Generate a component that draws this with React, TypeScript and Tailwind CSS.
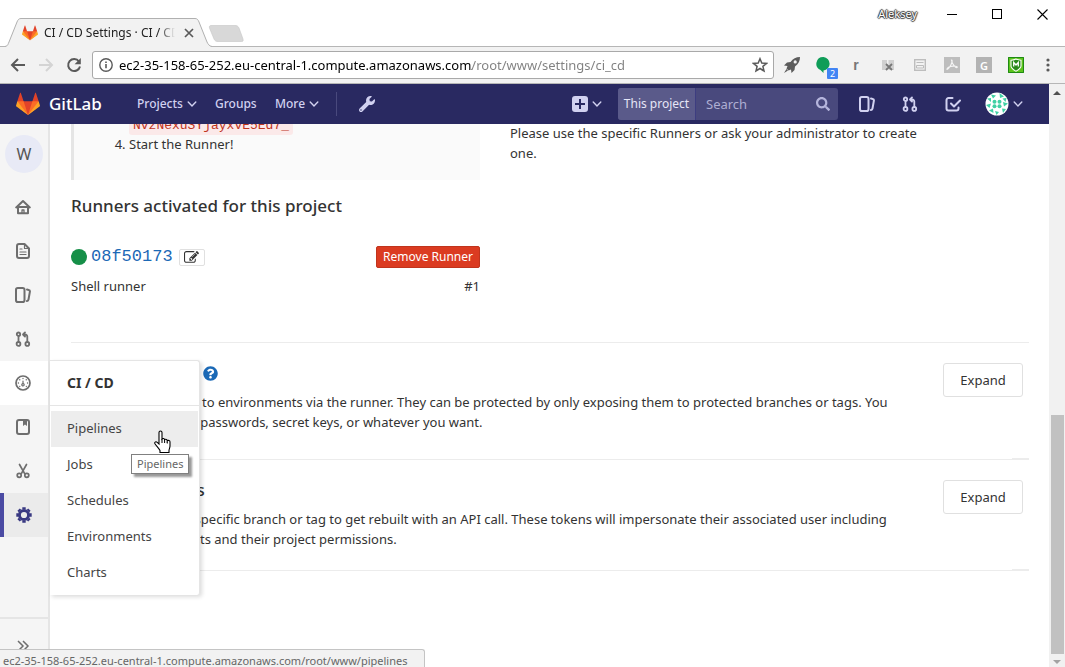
import React from "react";
import { FaWrench, FaQuestionCircle, FaSearch } from "react-icons/fa";

type IconProps = { className?: string };

function GitLabLogo({ className }: IconProps) {
  return (
    <svg className={className} viewBox="0 0 36 36" aria-hidden="true">
      <path fill="#e24329" d="M2 14l9.38 9v-9l-4-12.28c-.205-.632-1.176-.632-1.38 0z" />
      <path fill="#e24329" d="M34 14l-9.38 9v-9l4-12.28c.205-.632 1.176-.632 1.38 0z" />
      <path fill="#e24329" d="M18 34.38L3 14h30z" />
      <path fill="#fc6d26" d="M18 34.38L11.38 14H2l4 11z" />
      <path fill="#fc6d26" d="M18 34.38L24.62 14H34l-4 11z" />
      <path fill="#fca326" d="M2 14L.1 20.16c-.18.565 0 1.2.5 1.56L18.02 34.38z" />
      <path fill="#fca326" d="M34 14l1.9 6.16c.18.565 0 1.2-.5 1.56L18 34.38z" />
    </svg>
  );
}

function Line({ className = "size-4", width = 2, children }: IconProps & { width?: number; children: React.ReactNode }) {
  return (
    <svg className={`shrink-0 ${className}`} viewBox="0 0 16 16" fill="none" stroke="currentColor" strokeWidth={width} strokeLinecap="round" strokeLinejoin="round" aria-hidden="true">
      {children}
    </svg>
  );
}

const Chevron = () => (
  <svg className="h-[10px] w-[10px] shrink-0" viewBox="0 0 10 10" fill="none" stroke="currentColor" strokeWidth="1.4" strokeLinecap="round" aria-hidden="true">
    <path d="M1.2 3l3.8 4 3.8-4" />
  </svg>
);

const HomeIcon = () => (
  <Line>
    <path d="M1.2 8.4L8 2l6.800 6.400" />
    <path d="M3 8.500V14.200H13V8.500M3.500 8h9" />
    <path d="M7 14v-3h2v3" strokeWidth={1.300} />
  </Line>
);
const FileIcon = () => (
  <Line>
    <path d="M4 1h5.500L14 5.500V13a2 2 0 0 1-2 2H4a2 2 0 0 1-2-2V3a2 2 0 0 1 2-2z" />
    <path d="M9.500 1.500v4h4M5 6h2M5 9h6M5 11.500h6" strokeWidth={1.200} />
  </Line>
);
const IssuesIcon = ({ className = "size-4" }: IconProps) => (
  <Line className={className}>
    <rect x="1" y="1" width="8.500" height="14" rx="1.800" />
    <path d="M12 2.600l1.700.3a1.500 1.500 0 0 1 1.200 1.700L13.500 12.500a1.800 1.800 0 0 1-1.500 1.500" />
  </Line>
);
const MergeIcon = ({ className = "size-4" }: IconProps) => (
  <Line className={className} width={1.8}>
    <circle cx="3.500" cy="3.200" r="1.700" />
    <circle cx="3.500" cy="12.900" r="1.900" />
    <circle cx="12.300" cy="12.900" r="1.900" />
    <path d="M3.500 5v6M12.300 11V5.500a2 2 0 0 0-2-2H9M10 1.500L8 3.500l2 2" />
  </Line>
);
const GaugeIcon = () => (
  <Line width={1.7}>
    <circle cx="8" cy="8" r="7" />
    <path d="M8 3.300v.2M4.700 4.700l.1.100M11.300 4.700l-.1.100M3.300 8h.2M12.500 8h.2M4.700 11.300h.1M11.300 11.300h.1" strokeWidth={1.300} />
    <path d="M8 6v3" strokeWidth={1.200} />
    <circle cx="8" cy="9.700" r="1.200" strokeWidth={1.200} />
  </Line>
);
const BookIcon = () => (
  <Line>
    <rect x="2" y="1" width="12" height="14" rx="2" />
    <path d="M8 1h4v6l-2-1.600L8 7z" fill="currentColor" stroke="none" />
  </Line>
);
const ScissorsIcon = () => (
  <Line width={1.7}>
    <path d="M4.500 1.500l5 8.800M11.500 1.500l-5 8.800" />
    <circle cx="4.200" cy="12.300" r="2" />
    <circle cx="11.800" cy="12.300" r="2" />
  </Line>
);
const GearIcon = () => (
  <Line>
    <circle cx="8" cy="8" r="4.600" strokeWidth={3} />
    <path d="M8 .3v2M8 13.700v2M.3 8h2M13.700 8h2M2.600 2.600L4 4M12 12l1.400 1.400M2.600 13.400L4 12M12 4l1.400-1.400" strokeWidth={3.400} strokeLinecap="butt" />
  </Line>
);
const TodoIcon = () => (
  <Line>
    <path d="M7.500 2H3.500A2 2 0 0 0 1.500 4v8.500a2 2 0 0 0 2 2h8a2 2 0 0 0 2-2V11.500" />
    <path d="M6 7.500l3 3L15 4.500" />
  </Line>
);
const EditIcon = () => (
  <svg className="size-[15px]" viewBox="0 0 1792 1792" fill="currentColor" aria-hidden="true">
    <path d="M888 1184l116-116-152-152-116 116v56h96v96h56zm440-720q-16-16-33 1l-350 350q-17 17-1 33t33-1l350-350q17-17 1-33zm80 594v190q0 119-84.500 203.500t-203.500 84.500h-832q-119 0-203.500-84.500t-84.500-203.500v-832q0-119 84.500-203.500t203.500-84.500h832q63 0 117 25 15 7 18 23 3 17-9 29l-49 49q-14 14-32 8-23-6-45-6h-832q-66 0-113 47t-47 113v832q0 66 47 113t113 47h832q66 0 113-47t47-113v-126q0-13 9-22l64-64q15-15 35-7t20 29zm-96-738l288 288-672 672h-288v-288zm444 132l-92 92-288-288 92-92q28-28 68-28t68 28l152 152q28 28 28 68t-28 68z" />
  </svg>
);

const sidebarItems = [
  { label: "Overview", icon: <HomeIcon /> },
  { label: "Repository", icon: <FileIcon /> },
  { label: "Issues", icon: <IssuesIcon /> },
  { label: "Merge Requests", icon: <MergeIcon /> },
  { label: "CI / CD", icon: <GaugeIcon />, open: true },
  { label: "Wiki", icon: <BookIcon /> },
  { label: "Snippets", icon: <ScissorsIcon /> },
  { label: "Settings", icon: <GearIcon />, active: true },
];

function TabStrip() {
  return (
    <div className="flex h-[47px] shrink-0 border-b border-[#b6b6b6] bg-white">
      <div className="relative mt-[18px] ml-[5px] h-[29px] w-[207px] shrink-0">
        <svg className="absolute inset-0 h-full w-full" viewBox="0 0 207 29" aria-hidden="true">
          <path d="M0 29C3 28 3 26 4 24L12 4C13 1.500 14 .5 16 .5H190C192 .5 193 1.500 194 4L202 24C203 26 204 28 207 29z" fill="#f2f2f2" />
          <path d="M0 28.500C3 28 3 26 4 24L12 4C13 1.500 14 .5 16 .5H190C192 .5 193 1.500 194 4L202 24C203 26 204 28 207 28.500" fill="none" stroke="#b0b0b0" />
        </svg>
        <div className="relative flex h-full items-center pl-[17px]">
          <GitLabLogo className="size-4 shrink-0" />
          <span className="ml-[6px] w-[131px] overflow-hidden text-xs whitespace-nowrap text-[#222] [mask-image:linear-gradient(to_right,black_88%,transparent)]">CI / CD Settings · CI / CD</span>
          <button aria-label="Close tab" className="ml-[9px] text-[#5a5a5a]">
            <svg className="size-[10px]" viewBox="0 0 10 10" stroke="currentColor" strokeWidth="1.700" aria-hidden="true"><path d="M1 1l8 8M9 1L1 9" /></svg>
          </button>
        </div>
      </div>
      <button aria-label="New tab" className="mt-[25px] -ml-[4px] h-[17px]">
        <svg className="h-[17px] w-9" viewBox="0 0 36 17" aria-hidden="true"><path d="M3 .5H27C29 .5 30 1 31 3L35 14C35.500 16 35 16.500 33.500 16.500H10C8 16.500 7 16 6 14L1.500 3C1 1.500 1.500 .5 3 .5z" fill="#d8d8d8" stroke="#c6c6c6" strokeWidth=".6" /></svg>
      </button>
      <div className="ml-auto flex h-7 items-center">
        <span className="mr-3 text-[11px] text-white [text-shadow:1px_0_1px_#333,-1px_0_1px_#333,0_1px_1px_#333,0_-1px_1px_#333]">Aleksey</span>
        <button aria-label="Minimize" className="flex h-7 w-[45px] items-center justify-center"><span className="h-px w-[10px] bg-black" /></button>
        <button aria-label="Maximize" className="flex h-7 w-[45px] items-center justify-center"><span className="size-[10px] border border-black" /></button>
        <button aria-label="Close" className="flex h-7 w-[46px] items-center justify-center">
          <svg className="size-[11px]" viewBox="0 0 11 11" stroke="#000" strokeWidth="1.100" aria-hidden="true"><path d="M.5 .5l10 10M10.500 .5l-10 10" /></svg>
        </button>
      </div>
    </div>
  );
}

function Extension({ label, children }: { label: string; children: React.ReactNode }) {
  return (
    <button aria-label={label} className="flex h-9 w-8 shrink-0 items-center justify-center">
      {children}
    </button>
  );
}

function Toolbar() {
  return (
    <div className="flex h-[37px] shrink-0 items-center border-b border-[#b6b6b6] bg-[#f2f2f2] pr-px">
      <div className="flex w-[92px] shrink-0 items-center gap-3 pl-[10px] text-[#5a5a5a]">
        <button aria-label="Back"><Line><path d="M15 8H2M8 2L2 8l6 6" strokeLinecap="butt" strokeLinejoin="miter" /></Line></button>
        <button aria-label="Forward" className="text-[#d4d4d4]"><Line><path d="M1 8h13M8 2l6 6-6 6" strokeLinecap="butt" strokeLinejoin="miter" /></Line></button>
        <button aria-label="Reload">
          <Line><path d="M13 4.500A6 6 0 1 0 14 9.500" strokeLinecap="butt" /><path d="M14.800 1v6.200H8.600z" fill="currentColor" stroke="none" /></Line>
        </button>
      </div>
      <div className="flex h-7 min-w-0 flex-1 items-center rounded-[3px] border border-[#a9a9a9] bg-white pr-[5px] pl-[6px]">
        <svg className="size-[14px] shrink-0" viewBox="0 0 14 14" fill="none" stroke="#5a5a5a" strokeWidth="1.400" aria-hidden="true"><circle cx="7" cy="7" r="6.200" /><path d="M7 6v4.200M7 3.500v1.400" strokeWidth="1.600" /></svg>
        <input
          aria-label="Address"
          readOnly
          value="ec2-35-158-65-252.eu-central-1.compute.amazonaws.com/root/www/settings/ci_cd"
          className="ml-[6px] min-w-0 flex-1 bg-[linear-gradient(to_right,#000_353px,#808080_353px)] bg-clip-text pt-px text-[13px] text-transparent outline-none"
        />
        <button aria-label="Bookmark this page">
          <svg className="size-4" viewBox="0 0 16 16" fill="none" stroke="#5a5a5a" strokeWidth="1.500" aria-hidden="true"><path d="M8 1.700l1.800 4.300 4.700.4-3.600 3 1.100 4.600L8 11.500 4 14l1.100-4.600-3.600-3L6.200 6z" /></svg>
        </button>
      </div>
      <div className="ml-[2px] flex shrink-0">
        <Extension label="Rocket">
          <svg className="size-4" viewBox="0 0 16 16" fill="#5c5c5c" aria-hidden="true"><path fillRule="evenodd" d="M16 0C12 0 9 1.500 6.500 5L3 5.500 0 8.500l3.500.5L2.500 11.500l2 2L7 12.500 7.500 16l3-3L11 9.500C14.500 7 16 4 16 0zM11.200 3.300a1.600 1.600 0 1 1 0 3.200 1.600 1.600 0 0 1 0-3.200z" /><path d="M2.500 12L0 16l4-2.500z" /></svg>
        </Extension>
        <Extension label="Chat">
          <span className="relative">
            <svg className="size-4" viewBox="0 0 16 16" fill="#0f9d58" aria-hidden="true"><path d="M7.500 0a7 6.800 0 0 1 0 13.500V16L4.500 13A7 6.800 0 0 1 7.500 0z" /></svg>
            <span className="absolute top-[11px] left-[11px] flex h-[11px] w-[11px] items-center justify-center rounded-[1px] bg-[#4285f4] text-[9px] leading-none text-white">2</span>
          </span>
        </Extension>
        <Extension label="Reader"><span className="font-['Liberation_Sans',sans-serif] text-sm leading-4 font-bold text-[#777]">r</span></Extension>
        <Extension label="Blocker">
          <svg className="size-3" viewBox="0 0 12 12" aria-hidden="true"><path d="M0 1h5v10H0zM6.500 1H12v10H6.500z" fill="#d0d0d0" /><path d="M4 5l6 6M10 5l-6 6" stroke="#777" strokeWidth="1.800" /></svg>
        </Extension>
        <Extension label="News">
          <svg className="size-3" viewBox="0 0 12 12" fill="none" stroke="#bdbdbd" aria-hidden="true"><rect x=".7" y=".7" width="10.600" height="10.600" strokeWidth="1.400" /><path d="M2.500 3.500h7M2.500 6.500h7v2.500h-7z" /></svg>
        </Extension>
        <Extension label="PDF">
          <svg className="size-4" viewBox="0 0 16 16" aria-hidden="true"><path fill="#bdbdbd" d="M0 0h16v16H0z" /><path d="M7.500 3c1.500 0 0 4-1.500 6.500S2.500 13 3 12s3-2.500 6-2.800 5 .8 4 1.400S8 7.500 7.500 3z" fill="none" stroke="#f4f4f4" strokeWidth="1.200" /></svg>
        </Extension>
        <Extension label="Grammar"><span className="flex size-4 items-center justify-center bg-[#b3b3b3] text-[11px] leading-none font-semibold text-white">G</span></Extension>
        <Extension label="Shield">
          <svg className="size-4" viewBox="0 0 16 16" aria-hidden="true"><path fill="#5cc41c" d="M0 0h16v16H0z" /><path d="M.5 .5h15v15H.5z" fill="none" stroke="#1f8a14" /><path d="M3 3.200c2 0 3.500-.4 5-1.200 1.500.8 3 1.200 5 1.200V9c0 2.500-3 4-5 5.200C6 13 3 11.500 3 9z" fill="#2a8a1c" stroke="#fff" strokeWidth="1.100" /><path d="M5.700 9.500V5.500L8 8l2.300-2.500v4" fill="none" stroke="#fff" strokeWidth="1.300" /></svg>
        </Extension>
        <Extension label="Menu">
          <svg className="h-[14px] w-1" viewBox="0 0 4 14" fill="#5a5a5a" aria-hidden="true"><circle cx="2" cy="2" r="1.600" /><circle cx="2" cy="7" r="1.600" /><circle cx="2" cy="12" r="1.600" /></svg>
        </Extension>
      </div>
    </div>
  );
}

function Navbar() {
  return (
    <header className="flex h-10 shrink-0 items-center bg-[#292961] pr-[26px] pl-4 text-[#d1d1f0]">
      <a href="#home" className="flex items-center gap-[9px]">
        <GitLabLogo className="size-6" />
        <span className="w-[88px] text-[17px] leading-6 font-medium text-white">GitLab</span>
      </a>
      <nav className="flex items-center text-xs font-medium">
        <a href="#projects" className="flex w-[78px] items-center gap-1">Projects<Chevron /></a>
        <a href="#groups" className="w-[60px]">Groups</a>
        <a href="#more" className="flex w-[61px] items-center gap-1">More<Chevron /></a>
      </nav>
      <span className="h-6 w-px bg-[#49497d]" />
      <a href="#admin" aria-label="Admin area" className="ml-[22px]"><FaWrench className="size-4 -scale-x-100 rotate-90" /></a>
      <div className="ml-auto flex items-center">
        <button aria-label="New" className="flex items-center gap-1">
          <svg className="size-4" viewBox="0 0 16 16" aria-hidden="true"><rect width="16" height="16" rx="3" fill="currentColor" /><path d="M8 3v10M3 8h10" stroke="#292961" strokeWidth="2" /></svg>
          <Chevron />
        </button>
        <form className="ml-4 flex h-8 w-[220px] items-center overflow-hidden rounded-[3px] bg-[#49497d] text-sm">
          <span className="flex h-full w-[78px] shrink-0 items-center justify-center border-r border-[#3d3d80] bg-[#5a5a8a] text-xs text-[#e6e6f7]">This project</span>
          <input aria-label="Search" placeholder="Search" className="min-w-0 flex-1 bg-transparent pl-[10px] text-[13px] outline-none placeholder:text-[#aeaed2]" />
          <FaSearch className="mr-2 size-[14px] shrink-0 text-[#b5b5dc]" />
        </form>
        <a href="#issues" aria-label="Issues" className="ml-[21px]"><IssuesIcon /></a>
        <a href="#merge_requests" aria-label="Merge requests" className="ml-[27px]"><MergeIcon /></a>
        <a href="#todos" aria-label="Todos" className="ml-[27px]"><TodoIcon /></a>
        <button aria-label="Account" className="ml-6 flex items-center gap-1">
          <svg className="size-6" viewBox="0 0 24 24" aria-hidden="true">
            <circle cx="12" cy="12" r="11.500" fill="#fff" />
            <g fill="#3fd0a4">
              <path d="M6 2.500l5 1-3 3zM14.500 1l4.500 3.500-4 1.500zM2 6.500L6 6v4zM1 13l5-1.500L4.500 16zM4 18.500l4-2 .5 4.500zM10 19l4 1-2.500 3zM17 16.500l4 .5-3 4zM18 10l5 1.500-4 3zM17.500 6.500l4-.5-1 4z" />
              <circle cx="9.500" cy="9.700" r="2" /><circle cx="14.500" cy="9.700" r="2" /><circle cx="9.500" cy="14.300" r="2" /><circle cx="14.500" cy="14.300" r="2" />
            </g>
          </svg>
          <Chevron />
        </button>
      </div>
    </header>
  );
}

function PipelineMenu() {
  return (
    <div className="absolute -top-px left-[50px] z-10 w-[150px] rounded-r-[3px] border-t border-r border-[#e5e5e5] bg-white pb-1 text-[13px] text-[#444] shadow-[2px_2px_4px_rgba(0,0,0,0.14)]">
      <div className="flex h-[45px] items-center border-b border-[#e5e5e5] pl-[17px] text-sm font-bold text-[#333]">CI / CD</div>
      <ul className="pt-[5px]">
        {["Pipelines", "Jobs", "Schedules", "Environments", "Charts"].map((label) => (
          <li key={label} className={label === "Pipelines" ? "mr-px ml-px bg-[#ededed]" : "mr-px ml-px"}>
            <a href={`#${label.toLowerCase()}`} className="flex h-9 items-center pl-4">{label}</a>
          </li>
        ))}
      </ul>
      <svg className="absolute top-[70px] left-[104px] h-[22px] w-[18px] overflow-visible" viewBox="0 0 18 22" aria-hidden="true">
        <path d="M5 1.500a1.500 1.500 0 0 1 3 0V8a1.500 1.500 0 0 1 2.600.7A1.600 1.600 0 0 1 13.300 10 1.500 1.500 0 0 1 16 11V15c0 2-1 3-1 4.500V21.500H6V19.500C5 17.500 2 14.500.8 12.500.2 11 2 10.200 3.200 11.300L5 13z" fill="#fff" stroke="#000" strokeWidth="1.100" />
        <path d="M8 8v4M10.600 9v3M13.300 10.500v2" stroke="#000" strokeWidth="1" />
      </svg>
      <div role="tooltip" className="absolute top-[93px] left-[81px] flex h-5 items-center border border-[#808080] bg-white px-[5px] text-[11px] text-[#666] shadow-[3px_3px_2px_rgba(0,0,0,0.4)]">Pipelines</div>
    </div>
  );
}

function Sidebar() {
  return (
    <aside className="flex w-[50px] shrink-0 flex-col border-r-2 border-[#e5e5e5] bg-[#f5f5f5] text-[#6e6e6e]">
      <a href="#project" className="mt-[11px] ml-[5px] flex size-[38px] shrink-0 items-center justify-center rounded-full bg-[#e8eaf6] text-base text-[#555]">W</a>
      <ul className="mt-3">
        {sidebarItems.map((item) => (
          <li key={item.label} className={`relative h-11 ${item.open ? "bg-white" : item.active ? "bg-[#ebebeb] text-[#393982]" : ""}`}>
            <a href="#section" aria-label={item.label} className={`flex h-11 w-full items-center ${item.active ? "border-l-4 border-[#4b4ba3] pl-3" : "pl-[15px]"}`}>{item.icon}</a>
            {item.open && <PipelineMenu />}
          </li>
        ))}
      </ul>
      <button aria-label="Expand sidebar" className="mt-auto flex h-[50px] shrink-0 items-center border-t-2 border-[#e5e5e5] pt-[6px] pl-4">
        <svg className="size-[14px]" viewBox="0 0 14 14" fill="none" stroke="currentColor" strokeWidth="1.500" aria-hidden="true"><path d="M2 2l5 5-5 5M7 2l5 5-5 5" /></svg>
      </button>
    </aside>
  );
}

function SettingsSection({ title, help, className, children }: { title: string; help?: boolean; className: string; children: React.ReactNode }) {
  return (
    <section className={`flex flex-col border-b border-[#ececec] pt-5 ${className}`}>
      <div className="flex justify-between pr-[6px]">
        <div className="max-w-[836px]">
          <h4 className="flex h-5 items-center gap-1 text-[17px] font-medium text-[#333]">
            {title}
            {help && <a href="#help" aria-label="Help"><FaQuestionCircle className="size-[15px] text-[#1b69b6]" /></a>}
          </h4>
          <p className="mt-[9px]">{children}</p>
        </div>
        <button className="h-[34px] w-20 shrink-0 rounded-[3px] border border-[#e0e0e0] bg-white text-[13px]">Expand</button>
      </div>
      <span className="mt-auto h-px w-[17px] self-end bg-[#ececec]" />
    </section>
  );
}

function Content() {
  return (
    <main className="min-w-0 flex-1 overflow-hidden pr-5 pl-[21px] text-[13px] leading-5 text-[#333]">
      <div className="-mt-[10px] grid grid-cols-2 gap-[30px] pr-[110px]">
        <div>
          <div className="h-[66px] border-l-[3px] border-[#e5e5e5] bg-[#fafafa] pl-[55px]">
            <div className="h-5"><code className="rounded-[3px] bg-[#fbe9e9] px-1 py-[2px] font-['Liberation_Mono',monospace] text-[13px] text-[#c0341d]">NvzNexuSYjayxvE5Ed7_</code></div>
            <ol start={4} className="list-decimal"><li>Start the Runner!</li></ol>
          </div>
          <h4 className="mt-[14px] text-[17px] leading-6 font-medium">Runners activated for this project</h4>
          <div className="mt-7 flex h-[22px] items-center">
            <span className="mr-1 size-4 rounded-full bg-[#168f48]" />
            <a href="#runner" className="font-['Liberation_Mono',monospace] text-[17px] text-[#1b69b6]">08f50173</a>
            <a href="#edit" aria-label="Edit runner" className="ml-[6px] flex h-[17px] w-[26px] items-center justify-center rounded-[2px] border border-[#e0e0e0]"><EditIcon /></a>
            <button className="ml-auto h-[22px] rounded-[2px] border border-[#c0341d] bg-[#db3b21] px-[6px] text-xs leading-5 text-white">Remove Runner</button>
          </div>
          <div className="mt-2 flex justify-between"><span>Shell runner</span><span>#1</span></div>
        </div>
        <p className="pt-[9px]">Please use the specific Runners or ask your administrator to create one.</p>
      </div>
      <hr className="mt-[46px] border-[#ececec]" />
      <SettingsSection title="Secret variables" help className="h-[117px]">
        Variables are applied to environments via the runner. They can be protected by only exposing them to protected branches or tags. You can use variables for passwords, secret keys, or whatever you want.
      </SettingsSection>
      <SettingsSection title="Pipeline triggers" className="h-[111px]">
        Triggers can force a specific branch or tag to get rebuilt with an API call. These tokens will impersonate their associated user including their access to projects and their project permissions.
      </SettingsSection>
    </main>
  );
}

function Scrollbar() {
  return (
    <div className="flex w-4 shrink-0 flex-col items-center bg-[#f1f1f1]" aria-hidden="true">
      <svg className="h-[17px] w-4 shrink-0" viewBox="0 0 16 17" fill="#505050"><path d="M4 11l4-4 4 4z" /></svg>
      <div className="flex-[314]" />
      <div className="w-[13px] flex-[239] bg-[#c1c1c1]" />
      <svg className="h-[13px] w-4 shrink-0" viewBox="0 0 16 13" fill="#a3a3a3"><path d="M4 6l4 4 4-4z" /></svg>
    </div>
  );
}

export default function App() {
  return (
    <div className="relative flex h-screen flex-col overflow-hidden bg-white font-['Noto_Sans',sans-serif]">
      <TabStrip />
      <Toolbar />
      <div className="flex min-h-0 flex-1">
        <div className="flex min-w-0 flex-1 flex-col">
          <Navbar />
          <div className="flex min-h-0 flex-1">
            <Sidebar />
            <Content />
          </div>
        </div>
        <Scrollbar />
      </div>
      <div role="status" className="absolute bottom-0 left-0 flex h-[18px] w-[425px] items-center rounded-tr-[3px] border-t border-r border-[#c4c4c4] bg-[#f2f2f2] pt-[5px] pl-[3px] text-[11px] text-[#666]">
        ec2-35-158-65-252.eu-central-1.compute.amazonaws.com/root/www/pipelines
      </div>
    </div>
  );
}
